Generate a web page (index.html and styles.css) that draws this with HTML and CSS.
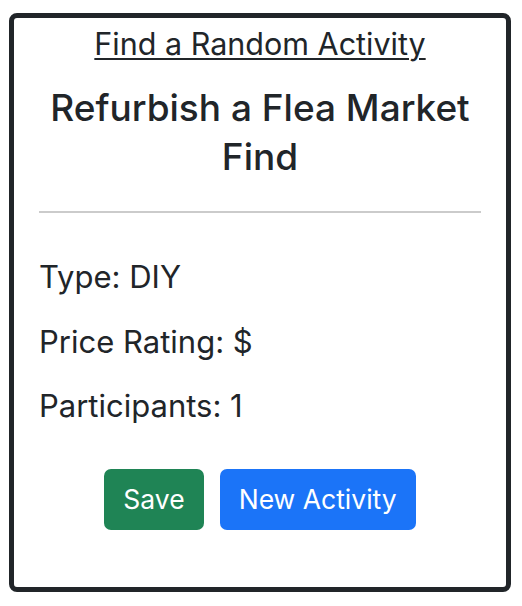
FILE: index.html
```html
<!DOCTYPE html>
<html lang="en">
<head>
<meta charset="utf-8">
<title>Random Activity</title>
<link rel="stylesheet" href="styles.css">
</head>
<body>
<div class="card">
  <a class="top-link" href="#">Find a Random Activity</a>
  <h2 class="title">Refurbish a Flea Market Find</h2>
  <hr class="divider">
  <div class="details">
    <p class="detail">Type: DIY</p>
    <p class="detail">Price Rating: $</p>
    <p class="detail">Participants: 1</p>
  </div>
  <div class="actions">
    <button class="btn btn-save" type="button">Save</button>
    <button class="btn btn-new" type="button">New Activity</button>
  </div>
</div>
</body>
</html>
```
FILE: styles.css
```css
html, body {
  margin: 0;
  padding: 0;
  background: #fff;
}
body {
  padding: 13px 11px 0 9px;
  font-family: Inter, "Liberation Sans", Arial, sans-serif;
  color: #212529;
}
.card {
  border: 5px solid #212529;
  border-radius: 8px;
  padding: 6px 25px 0;
  height: 579px;
  box-sizing: border-box;
  text-align: center;
}
.top-link {
  display: block;
  font-size: 30.5px;
  line-height: 40px;
  color: #212529;
  text-decoration: underline;
  text-underline-offset: 3px;
  text-decoration-thickness: 2px;
}
.title {
  margin: 19px 0 0;
  font-size: 37px;
  line-height: 49px;
  font-weight: 500;
}
.divider {
  margin: 30px 0 0;
  border: 0;
  border-top: 2px solid #cbcbcb;
}
.details {
  padding-top: 44px;
  text-align: left;
}
.detail {
  margin: 0 0 24.5px;
  font-size: 31px;
  line-height: 40px;
}
.actions {
  display: flex;
  justify-content: center;
  gap: 16px;
  margin-top: 43px;
}
.btn {
  font-family: inherit;
  font-size: 26.5px;
  line-height: 37px;
  border: 0;
  border-radius: 7px;
  padding: 12px 19px;
  color: #fff;
}
.btn-save { background: #1f8455; }
.btn-new { background: #1b74f8; }
```
